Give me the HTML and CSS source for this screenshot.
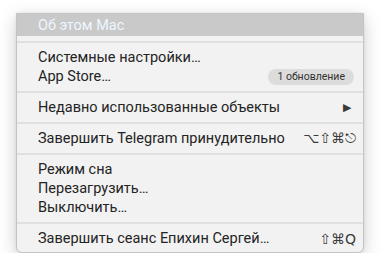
FILE: index.html
```html
<!DOCTYPE html>
<html lang="ru">
<head>
    <meta charset="UTF-8">
    <title>Apple menu</title>
    <link rel="stylesheet" href="styles.css">
</head>
<body>
    <div class="menu">
        <div class="item active">Об этом Mac</div>
        <div class="sep"></div>
        <div class="item">Системные настройки…</div>
        <div class="item">App Store… <span class="badge">1 обновление</span></div>
        <div class="sep"></div>
        <div class="item">Недавно использованные объекты <span class="arrow">&#9654;</span></div>
        <div class="sep"></div>
        <div class="item">Завершить Telegram принудительно <span class="keys">⌥⇧⌘⎋</span></div>
        <div class="sep"></div>
        <div class="item">Режим сна</div>
        <div class="item">Перезагрузить…</div>
        <div class="item">Выключить…</div>
        <div class="sep"></div>
        <div class="item">Завершить сеанс Епихин Сергей… <span class="keys">⇧⌘Q</span></div>
    </div>
</body>
</html>
```

FILE: styles.css
```css
body {
    margin: 0;
    background: #ffffff;
    font-family: Roboto, "Liberation Sans", sans-serif;
}

.menu {
    width: 346px;
    margin: 13px 0 0 16px;
    padding: 0 0 4px;
    background: #f2f2f2;
    border: 1px solid #c4c4c4;
    border-radius: 0 0 6px 6px;
    box-shadow: 0 5px 18px rgba(0, 0, 0, 0.2), 0 0 3px rgba(0, 0, 0, 0.08);
    color: #242424;
}

.item {
    display: flex;
    align-items: center;
    justify-content: space-between;
    height: 19px;
    padding: 0 7px 0 21px;
    font-size: 14.5px;
    white-space: nowrap;
}

.item.active {
    height: 22px;
    background: #c9c9c9;
    color: #eef6ff;
}

.sep {
    height: 12px;
    display: flex;
    align-items: center;
}

.sep::after {
    content: "";
    display: block;
    width: 100%;
    height: 2px;
    background: #e0e0e0;
}

.badge {
    margin-right: 2px;
    padding: 0 9px;
    height: 16px;
    line-height: 16px;
    border-radius: 8px;
    background: #dcdcdc;
    color: #333333;
    font-size: 10.5px;
}

.arrow {
    margin-right: 5px;
    font-size: 11px;
    color: #3a3a3a;
}

.keys {
    font-family: "DejaVu Sans", sans-serif;
    font-size: 14px;
    color: #3a3a3a;
}
```
